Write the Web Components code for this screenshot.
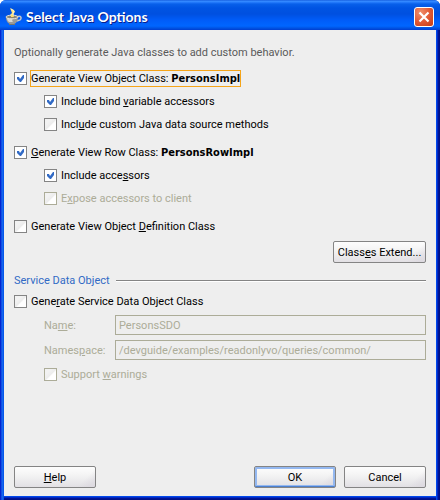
<!DOCTYPE html>
<html lang="en">
<head>
  <meta charset="utf-8">
  <title>Select Java Options</title>
  <style>
    body {
      margin: 0;
      background: #fff;
      color: #000;
      font: 11px/17px Roboto, "Liberation Sans", sans-serif;
    }

    b {
      font-family: "DejaVu Sans Condensed", "Liberation Sans", sans-serif;
    }

    .group {
      display: flex;
      flex-direction: column;
      gap: 6px;
      margin-bottom: 11px;
    }

    .intro {
      margin: 0 0 9px;
      color: #5a5a5a;
    }

    .actions {
      display: flex;
      justify-content: flex-end;
      margin: -5px 0 9px;
    }

    .fields {
      display: flex;
      flex-direction: column;
      gap: 5px;
      margin: 5px 0 6px 30px;
    }

    .spacer {
      flex: 1;
    }
  </style>
</head>
<body>
  <dialog-window caption="Select Java Options">
    <p class="intro">Optionally generate Java classes to add custom behavior.</p>

    <div class="group">
      <check-option checked focused>Generate View Ob<u>j</u>ect Class: <b>PersonsImpl</b></check-option>
      <check-option checked nested>Include bind <u>v</u>ariable accessors</check-option>
      <check-option nested>Incl<u>u</u>de custom Java data source methods</check-option>
    </div>

    <div class="group">
      <check-option checked><u>G</u>enerate View Row Class: <b>PersonsRowImpl</b></check-option>
      <check-option checked nested>Include acce<u>s</u>sors</check-option>
      <check-option disabled nested>E<u>x</u>pose accessors to client</check-option>
    </div>

    <div class="group">
      <check-option>Generate View Object <u>D</u>efinition Class</check-option>
    </div>

    <div class="actions">
      <push-button compact>Class<u>e</u>s Extend...</push-button>
    </div>

    <section-title>Service Data Object</section-title>
    <check-option>Gene<u>r</u>ate Service Data Object Class</check-option>
    <div class="fields">
      <text-field value="PersonsSDO">Na<u>m</u>e:</text-field>
      <text-field value="/devguide/examples/readonlyvo/queries/common/">Names<u>p</u>ace:</text-field>
    </div>
    <check-option disabled nested>Support <u>w</u>arnings</check-option>

    <push-button slot="footer"><u>H</u>elp</push-button>
    <span slot="footer" class="spacer"></span>
    <push-button slot="footer" primary>OK</push-button>
    <push-button slot="footer">Cancel</push-button>
  </dialog-window>

  <script>
    class DialogWindow extends HTMLElement {
      connectedCallback() {
        const shadow = this.attachShadow({ mode: 'open' });
        shadow.innerHTML = `
          <style>
            :host {
              display: flex;
              flex-direction: column;
              box-sizing: border-box;
              min-height: 100vh;
              padding: 0 4px 4px;
              border-radius: 6px 6px 0 0;
              background:
                linear-gradient(to right, #0019c8, #0831d9 1px, #1a6cf0 2px, #0050e8 4px, transparent 4px),
                linear-gradient(to left, #00107c, #0014a0 2px, #0040e8 3px, #0050f0 4px, transparent 4px),
                linear-gradient(to top, #00107c, #0014a0 2px, #0040e8 3px, #0050f0 4px, transparent 4px),
                #0054e3;
            }
            header {
              display: flex;
              align-items: center;
              gap: 4px;
              box-sizing: border-box;
              height: 30px;
              margin: 0 -4px;
              padding: 4px 6px 0 5px;
              border-radius: 6px 6px 0 0;
              background: linear-gradient(#0a4fd8, #3a90ff 1px, #2a80ff 2px, #0860ea 4px,
                #0054e3 8px, #0050e0 14px, #005cf8 20px, #0066ff 26px, #0054e4 28px, #003dd0 30px);
            }
            h1 {
              flex: 1;
              margin: 0;
              color: #fff;
              font: bold 14px/18px Lato, "Liberation Sans", sans-serif;
              text-shadow: 1px 1px 0 #0a1f8c;
            }
            .close {
              display: grid;
              place-items: center;
              width: 20px;
              height: 20px;
              padding: 0;
              border: 1px solid #fff;
              border-radius: 3px;
              background: radial-gradient(circle at 30% 25%, #f0906c, #e25a36 50%, #c43c14);
            }
            svg { display: block; }
            main {
              flex: 1;
              display: flex;
              flex-direction: column;
              background: #eee;
              padding: 14px 10px 8px;
            }
            .content { flex: 1; }
            footer {
              display: flex;
              gap: 8px;
            }
            ::slotted(.spacer) { flex: 1; }
          </style>
          <header>
            <svg width="17" height="18" viewBox="0 0 17 18" aria-hidden="true">
              <path d="M5 0l4 2 1 2-2 2 2 3H6L5 7l2-2z" fill="#ffe27a"/>
              <path d="M6 1l3 2-1 3 1 3" fill="none" stroke="#fff6c8"/>
              <path d="M12 9c4-2 5 1 3 3l-3 1" fill="none" stroke="#c8c8c8" stroke-width="1.4"/>
              <path d="M1 9h12c0 3-1 6-4 7H5c-3-1-4-4-4-7z" fill="#9b9a98"/>
              <path d="M2 10h6c-1 2-1 3 0 4H4c-1-1-2-2-2-4z" fill="#d8d7d4"/>
              <ellipse cx="7" cy="9" rx="6" ry="1.8" fill="#8a8474" stroke="#e6e4dd"/>
              <path d="M6 7h2l1 2H6z" fill="#ffdf6c"/>
              <path d="M4 16.500h6" stroke="#77746c"/>
            </svg>
            <h1></h1>
            <button class="close" type="button" aria-label="Close">
              <svg width="12" height="12" viewBox="0 0 12 12" aria-hidden="true">
                <path d="M1.500 1.500l9 9M10.500 1.500l-9 9" stroke="#fff" stroke-width="2.200"/>
              </svg>
            </button>
          </header>
          <main>
            <div class="content"><slot></slot></div>
            <footer><slot name="footer"></slot></footer>
          </main>
        `;
        shadow.querySelector('h1').textContent = this.getAttribute('caption');
      }
    }

    class CheckOption extends HTMLElement {
      connectedCallback() {
        const shadow = this.attachShadow({ mode: 'open' });
        shadow.innerHTML = `
          <style>
            :host {
              display: flex;
              align-items: center;
              gap: 3px;
              height: 17px;
            }
            :host([nested]) { margin-left: 30px; }
            :host([disabled]) { color: #acac98; }
            .box { display: grid; }
            .box > * { grid-area: 1 / 1; }
            input {
              appearance: none;
              box-sizing: border-box;
              width: 13px;
              height: 13px;
              margin: 0;
              border: 1px solid #848484;
              background: linear-gradient(135deg, #f2f2f2 30%, #ececec 50%, #fff 60%);
              outline: none;
            }
            input:disabled { border-color: #acac98; }
            input:checked { background: #fff; }
            svg {
              display: none;
              pointer-events: none;
            }
            input:checked + svg { display: block; }
            label {
              padding: 0 1px;
              line-height: 15px;
              white-space: nowrap;
            }
            :host([focused]) label { box-shadow: 0 0 0 1px #f5a418; margin: 0 1px; padding: 0; }
          </style>
          <span class="box">
            <input type="checkbox" id="check">
            <svg width="13" height="13" viewBox="0 0 13 13" aria-hidden="true">
              <path d="M3 5h2l1 2 3-4h1v3l-3 4H6L3 7z" fill="#316ac5"/>
            </svg>
          </span>
          <label for="check"><slot></slot></label>
        `;
        const input = shadow.querySelector('input');
        input.checked = this.hasAttribute('checked');
        input.disabled = this.hasAttribute('disabled');
      }
    }

    class TextField extends HTMLElement {
      connectedCallback() {
        const shadow = this.attachShadow({ mode: 'open' });
        shadow.innerHTML = `
          <style>
            :host {
              display: grid;
              grid-template-columns: 71px 1fr;
              align-items: center;
              color: #acac98;
            }
            input {
              box-sizing: border-box;
              min-width: 0;
              height: 20px;
              padding: 0 3px;
              border: 1px solid #acac98;
              background: #eee;
              color: inherit;
              font: inherit;
            }
          </style>
          <label for="field"><slot></slot></label>
          <input type="text" id="field" disabled>
        `;
        shadow.querySelector('input').value = this.getAttribute('value');
      }
    }

    class SectionTitle extends HTMLElement {
      connectedCallback() {
        this.attachShadow({ mode: 'open' }).innerHTML = `
          <style>
            :host {
              display: flex;
              align-items: center;
              gap: 6px;
              margin-bottom: 4px;
              color: #316ac5;
            }
            h2 {
              margin: 0;
              font: inherit;
            }
            .line {
              flex: 1;
              border-top: 1px solid #848484;
              border-bottom: 1px solid #fff;
            }
          </style>
          <h2><slot></slot></h2>
          <span class="line"></span>
        `;
      }
    }

    class PushButton extends HTMLElement {
      connectedCallback() {
        this.attachShadow({ mode: 'open' }).innerHTML = `
          <style>
            :host { display: block; }
            button {
              box-sizing: border-box;
              min-width: 82px;
              height: 22px;
              padding: 0 3px;
              border: 1px solid #848484;
              border-radius: 2px;
              background:
                linear-gradient(135deg, transparent 82%, #d8d4dc88 94%),
                linear-gradient(#fdfdfd, #f4f4f4 40%, #e2e0e4);
              color: #000;
              font: inherit;
              white-space: nowrap;
            }
            :host([compact]) button { min-width: 93px; }
            :host([primary]) button {
              box-shadow: inset 0 -1px 0 #4c80d0, inset 0 0 0 2px #94b8f0;
            }
          </style>
          <button type="button"><slot></slot></button>
        `;
      }
    }

    customElements.define('dialog-window', DialogWindow);
    customElements.define('check-option', CheckOption);
    customElements.define('text-field', TextField);
    customElements.define('section-title', SectionTitle);
    customElements.define('push-button', PushButton);
  </script>
</body>
</html>
